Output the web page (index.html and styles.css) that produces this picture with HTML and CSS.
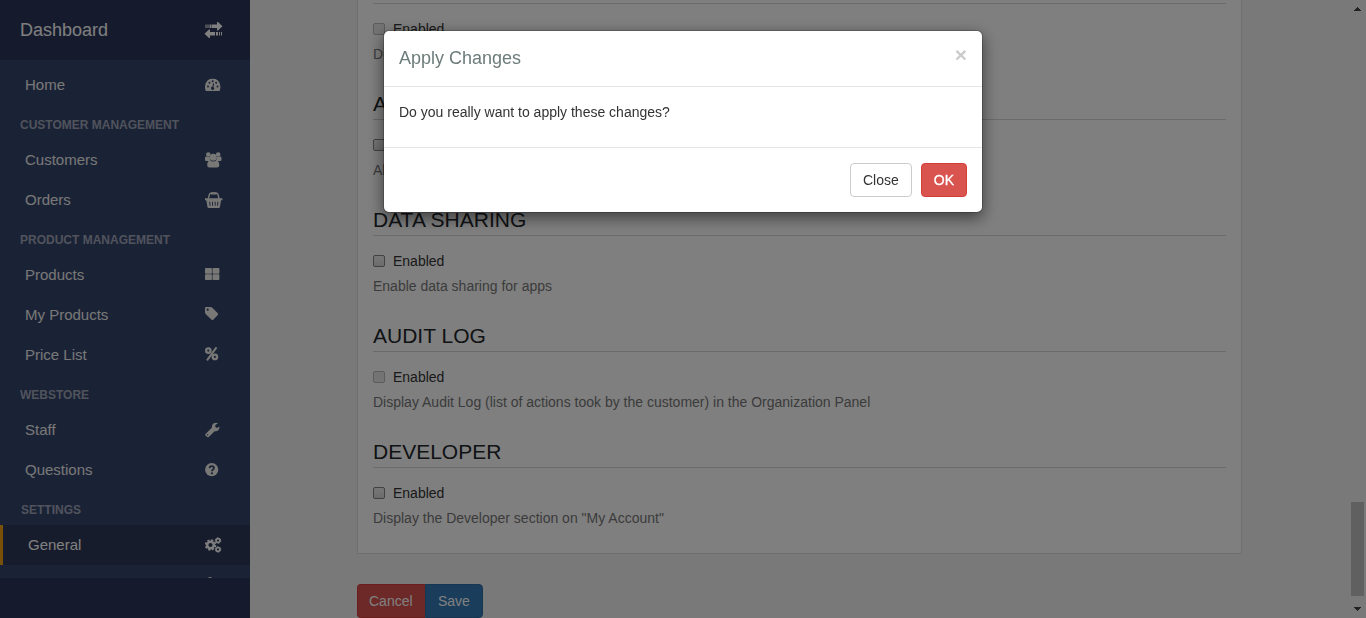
FILE: index.html
```
<!DOCTYPE html>
<html lang="en">
<head>
<meta charset="utf-8">
<title>Dashboard</title>
<link rel="stylesheet" href="styles.css">
</head>
<body>
<div class="app">
  <aside class="sidebar">
    <header class="brand"><span>Dashboard</span>
      <svg class="icon" width="19" height="16" viewBox="0 0 19 16"><path d="M1.500 2.500h1v3.500h-1zM3.500 2.500h1v3.500h-1zM5.500 2.500h2v3.500h-2zM8 2.500h5V0h1l4.500 4.300-4.500 4.200h-1V6H8zM6 10v3.500h5V10H6V7.500H5L.5 11.800 5 16h1v-2.500zM12 10h2v3.500h-2zM15 10h1v3.500h-1zM17 10h1v3.500h-1z"/></svg>
    </header>
    <nav class="menu">
      <a class="item">Home<svg class="icon" width="16" height="13" viewBox="0 0 16 13"><path fill-rule="evenodd" d="M0 8a7.700 8 0 0 1 15.400 0c0 2-.3 3.500-1 4.500H1C.3 11.500 0 10 0 8zM2 8a1 1 0 1 0 2 0A1 1 0 1 0 2 8zM3.500 4.300a1 1 0 1 0 2 0 1 1 0 1 0-2 0zM6.700 2.800a1 1 0 1 0 2 0 1 1 0 1 0-2 0zM10.200 4.300a1 1 0 1 0 2 0 1 1 0 1 0-2 0zM11.500 8a1 1 0 1 0 2 0 1 1 0 1 0-2 0zM8.200 4.800l-.8 3.400a1.600 1.600 0 1 0 1 .2l.8-3.400z"/></svg></a>
      <h6 class="group">CUSTOMER MANAGEMENT</h6>
      <a class="item">Customers<svg class="icon" width="17" height="16" viewBox="0 0 17 16"><circle cx="3.300" cy="2.500" r="2.300"/><circle cx="13.200" cy="2.500" r="2.300"/><path d="M0 6c0-1 .6-1.500 1.500-1.500.5.400 2 .7 3.400.3-.2 1.700.1 2.900.8 4.200H1.500C.5 9 0 8.500 0 7.500zM16.500 6c0-1-.6-1.500-1.500-1.500-.5.400-2 .7-3.400.3.2 1.700-.1 2.900-.8 4.200H15c1 0 1.500-.5 1.500-1.500z"/><circle cx="8.250" cy="5.300" r="3.500"/><path d="M2.200 13c0-2.500.8-4.400 2.700-4.600 2 1.500 4.700 1.500 6.700 0 1.900.2 2.700 2.100 2.700 4.600 0 1.700-.9 2.500-2.400 2.500H4.600c-1.500 0-2.400-.8-2.400-2.500z"/></svg></a>
      <a class="item">Orders<svg class="icon" width="18" height="16" viewBox="0 0 18 16"><path d="M3.300 7L4.400 2.500Q4.700 1.300 5.900 1.300h5.600q1.200 0 1.500 1.200L14.100 7" fill="none" stroke="currentColor" stroke-width="1.400"/><path d="M6 .2h5.400v2.200H6zM0 6.300h17.400v2H0z"/><path fill-rule="evenodd" d="M1.300 8h14.800l-1.100 6.800q-.2 1.200-1.400 1.200H3.800q-1.200 0-1.400-1.200zM4.200 9.800l.4 4h.9l-.3-4zM7 9.800v4h.9v-4zM9.700 9.800v4h.9v-4zM12.400 9.800l-.3 4h.9l.4-4z"/></svg></a>
      <h6 class="group">PRODUCT MANAGEMENT</h6>
      <a class="item">Products<svg class="icon up" width="15" height="12" viewBox="0 0 15 12"><rect width="6.900" height="5.700" rx=".8"/><rect x="7.500" width="6.900" height="5.700" rx=".8"/><rect y="6.300" width="6.900" height="5.700" rx=".8"/><rect x="7.500" y="6.300" width="6.900" height="5.700" rx=".8"/></svg></a>
      <a class="item">My Products<svg class="icon up" width="14" height="14" viewBox="0 0 14 14"><path fill-rule="evenodd" d="M0 1.200Q0 0 1.200 0H5.500q1 0 1.800.8l5.500 5.500q.8.800 0 1.600l-4.600 4.800q-.8.800-1.600 0L.8 7.200Q0 6.400 0 5.500zM1.600 2.700a1.100 1.100 0 1 0 2.200 0 1.100 1.100 0 1 0-2.200 0z"/></svg></a>
      <a class="item">Price List<svg class="icon up" width="14" height="14" viewBox="0 0 14 14"><g fill="none" stroke="currentColor"><circle cx="3.300" cy="3.600" r="2.200" stroke-width="2.300"/><circle cx="9.900" cy="9.900" r="2.200" stroke-width="2.300"/><path d="M11.500.3L2 13.300" stroke-width="2"/></g></svg></a>
      <h6 class="group">WEBSTORE</h6>
      <a class="item">Staff<svg class="icon" width="15" height="15" viewBox="0 0 15 15"><path fill-rule="evenodd" d="M.5 11.500l6.300-6.300C6.600 2 8.500.2 11 .2c.8 0 1.500.2 2.100.6L10.300 2.500v2l1.800 1 2.300-1.500c.4 2.800-1.800 5.300-4.800 4.700l-5.800 5.800q-.8.800-1.600 0L.5 12.900q-.7-.7 0-1.400zM2 12.300a.7.700 0 1 0 1.400 0 .7.700 0 1 0-1.400 0z"/></svg></a>
      <a class="item">Questions<svg class="icon" width="14" height="14" viewBox="0 0 14 14"><circle cx="6.700" cy="6.700" r="6.600"/><path class="knock" d="M4.500 5.100C4.700 3.600 5.600 3.200 6.800 3.200s2.100.8 2.100 1.900c0 1.500-2 1.500-2 3.100"/><path class="knock" d="M5.900 10.300h2"/></svg></a>
      <h6 class="group settings">SETTINGS</h6>
      <a class="item active">General<svg class="icon" width="17" height="16" viewBox="0 0 17 16"><g fill="none" stroke="currentColor"><circle cx="5.500" cy="8" r="3.300" stroke-width="2.400"/><circle cx="5.500" cy="8" r="4.900" stroke-width="1.600" stroke-dasharray="2.200 1.648"/><circle cx="13" cy="3.600" r="1.900" stroke-width="1.700"/><circle cx="13" cy="3.600" r="2.800" stroke-width="1" stroke-dasharray="1.500 1.432"/><circle cx="13" cy="12.400" r="1.900" stroke-width="1.700"/><circle cx="13" cy="12.400" r="2.800" stroke-width="1" stroke-dasharray="1.500 1.432"/></g></svg></a>
      <a class="item"><span></span><svg class="icon" width="14" height="16" viewBox="0 0 14 16"><circle cx="5" cy="2" r="2"/><path d="M2 5h6v11H2z"/></svg></a>
    </nav>
    <footer class="sidebar-foot"></footer>
  </aside>
  <main class="content">
    <div class="card">
      <section class="setting"><h2></h2><label><i class="check off"></i>Enabled</label><p>Display</p></section>
      <section class="setting"><h2>APPS</h2><label><i class="check"></i>Enabled</label><p>Allow</p></section>
      <section class="setting"><h2>DATA SHARING</h2><label><i class="check"></i>Enabled</label><p>Enable data sharing for apps</p></section>
      <section class="setting"><h2>AUDIT LOG</h2><label><i class="check off"></i>Enabled</label><p>Display Audit Log (list of actions took by the customer) in the Organization Panel</p></section>
      <section class="setting"><h2>DEVELOPER</h2><label><i class="check"></i>Enabled</label><p>Display the Developer section on "My Account"</p></section>
    </div>
    <div class="actions"><span class="cancel">Cancel</span><span class="save">Save</span></div>
  </main>
  <div class="scrollbar">
    <svg width="7" height="4" viewBox="0 0 7 4"><path d="M3 0h1v1h1v1h1v1h1v1H0V3h1V2h1V1h1z"/></svg>
    <div class="thumb"></div>
    <svg width="7" height="4" viewBox="0 0 7 4"><path d="M0 0h7v1H6v1H5v1H4v1H3V3H2V2H1V1H0z"/></svg>
  </div>
</div>
<div class="backdrop">
  <div class="modal" role="dialog">
    <header class="modal-head"><h4>Apply Changes</h4><span class="close">×</span></header>
    <div class="modal-body">Do you really want to apply these changes?</div>
    <footer class="modal-foot"><button class="btn">Close</button><button class="btn danger">OK</button></footer>
  </div>
</div>
</body>
</html>
```

FILE: styles.css
```
* { box-sizing: border-box; }
body { margin: 0; height: 618px; overflow: hidden; font: 14px/20px "Liberation Sans", Arial, sans-serif; color: #333; }
h2, h4, h6, p { margin: 0; font-weight: 400; }
.app { display: flex; height: 618px; background: #f3f3f3; }

.sidebar { width: 250px; height: 618px; flex: none; display: flex; flex-direction: column; background: #34446c; color: #fff; }
.brand { height: 60px; flex: none; display: flex; align-items: center; justify-content: space-between; padding: 0 27px 0 20px; background: #2a365a; font-size: 18px; }
.menu { flex: 1; min-height: 0; padding-top: 5px; overflow: hidden; }
.item { position: relative; height: 40px; display: flex; align-items: center; padding-left: 25px; font-size: 15px; color: #f0f0ec; }
.icon { fill: currentColor; flex: none; }
.item .icon { position: absolute; left: 205px; top: 50%; transform: translateY(-50%); }
.item .icon.up { transform: translateY(calc(-50% - 1px)); }
.knock { fill: none; stroke: #34446c; stroke-width: 1.8; }
.item.active { background: #2c3856; border-left: 3px solid #f0a010; color: #fff; }
.item.active .icon { left: 202px; }
.group { height: 35px; padding-left: 20px; font-size: 12px; line-height: 41px; font-weight: 700; color: #a0a7b8; }
.group.settings { padding-left: 21px; }
.sidebar-foot { height: 40px; flex: none; background: #2a365a; }

.content { flex: 1; height: 618px; overflow: hidden; display: flex; flex-direction: column; justify-content: flex-end; padding: 0 107px; }
.card { flex: none; background: #fff; border: 1px solid #ddd; padding: 0 15px 1px; }
.setting { height: 116px; }
.setting h2 { height: 32px; line-height: 32px; font-size: 21px; color: #22262b; border-bottom: 1px solid #d4d4d4; }
.setting label { display: flex; align-items: center; gap: 8px; height: 20px; margin-top: 15px; }
.setting p { margin-top: 5px; color: #777; }
.check { width: 12px; height: 12px; border: 1px solid #858585; border-radius: 2px; background: linear-gradient(#eee, #d8d8d8); }
.check.off { border-color: #b8b8b8; background: #e8e8e8; }
.actions { flex: none; display: flex; margin-top: 30px; line-height: 32px; color: #fff; }
.cancel, .save { height: 34px; padding: 0 12px; border: 1px solid #d43f3a; background: #d9534f; }
.cancel { width: 68px; padding: 0 11px; border-right: 0; border-radius: 4px 0 0 4px; }
.save { width: 58px; border-color: #2e6da4; background: #337ab7; border-radius: 0 4px 4px 0; }
.scrollbar { width: 17px; height: 618px; flex: none; display: flex; flex-direction: column; align-items: center; padding: 7px 0; }
.scrollbar svg { fill: #444; }
.thumb { width: 13px; height: 94px; margin: auto 0 11px; background: #c1c1c1; }

.backdrop { position: fixed; inset: 0; background: rgba(0, 0, 0, .5); }
.modal { width: 600px; margin: 30px 0 0 383px; background: #fff; background-clip: padding-box; border: 1px solid rgba(0, 0, 0, .2); border-radius: 6px; box-shadow: 0 5px 15px rgba(0, 0, 0, .5); }
.modal-head { height: 56px; display: flex; justify-content: space-between; padding: 15px; border-bottom: 1px solid #e5e5e5; }
.modal-head h4 { font-size: 18px; line-height: 24px; color: #6d7b7b; }
.close { font-size: 21px; line-height: 18px; font-weight: 700; color: #ccc; }
.modal-body { height: 60px; padding: 15px; }
.modal-foot { height: 65px; display: flex; justify-content: flex-end; gap: 9px; padding: 15px; border-top: 1px solid #e5e5e5; }
.btn { height: 34px; padding: 0 12px; font: inherit; color: #333; border: 1px solid #ccc; border-radius: 4px; background: #fff; }
.btn.danger { color: #fff; border-color: #d43f3a; background: #d9534f; -webkit-text-stroke: .3px #fff; }
```
